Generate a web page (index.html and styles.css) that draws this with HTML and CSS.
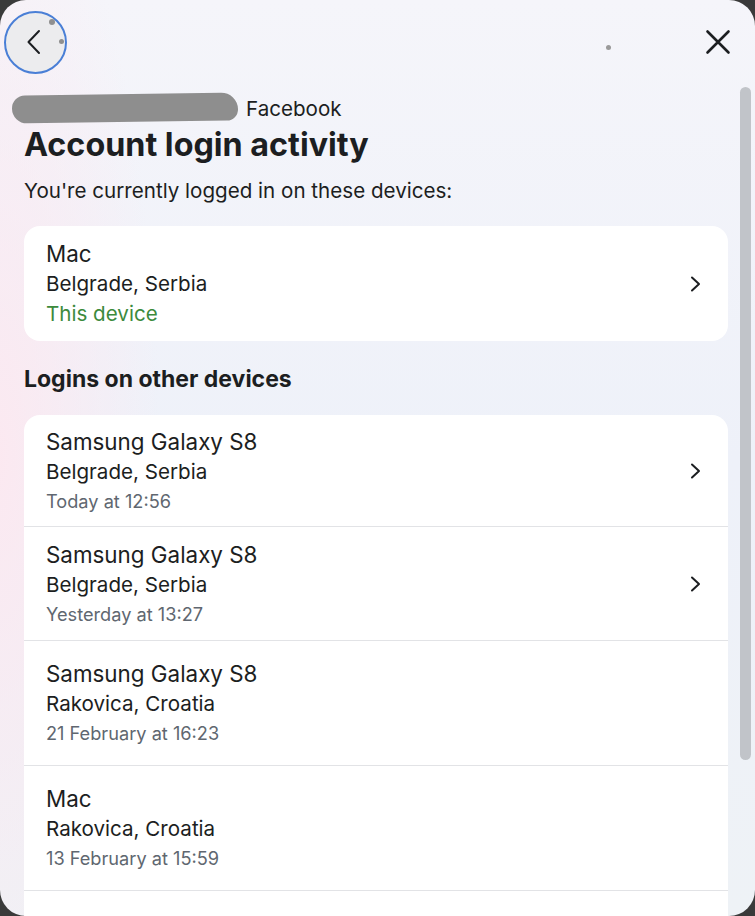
FILE: index.html
```html
<!DOCTYPE html>
<html>
<head>
<meta charset="utf-8">
<link rel="stylesheet" href="styles.css">
</head>
<body>
<div class="modal">
  <div class="topbar">
    <button class="back" aria-label="Back">
      <svg width="18" height="26" viewBox="0 0 18 26"><path d="M14 2 L3.5 13 L14 24" fill="none" stroke="#1c1e21" stroke-width="2" stroke-linecap="round" stroke-linejoin="round"/></svg>
    </button>
    <span class="dot"></span>
    <button class="close" aria-label="Close">
      <svg width="26" height="26" viewBox="0 0 26 26"><path d="M2.5 2.5 L23.5 23.5 M23.5 2.5 L2.5 23.5" fill="none" stroke="#1c1e21" stroke-width="2.6" stroke-linecap="round"/></svg>
    </button>
  </div>
  <div class="scrollbar"></div>
  <div class="content">
    <div class="account"><span class="redact"></span><span class="brand">Facebook</span></div>
    <h1 class="title">Account login activity</h1>
    <p class="subtitle">You're currently logged in on these devices:</p>
    <div class="card first">
      <div class="row">
        <div class="info">
          <div class="device">Mac</div>
          <div class="loc">Belgrade, Serbia</div>
          <div class="current">This device</div>
        </div>
        <svg class="chev" width="12" height="16" viewBox="0 0 12 16"><path d="M2 1.5 L9 8 L2 14.5" fill="none" stroke="#1c1e21" stroke-width="2" stroke-linecap="round" stroke-linejoin="round"/></svg>
      </div>
    </div>
    <h2 class="section">Logins on other devices</h2>
    <div class="card list">
      <div class="row r1">
        <div class="info">
          <div class="device">Samsung Galaxy S8</div>
          <div class="loc">Belgrade, Serbia</div>
          <div class="time">Today at 12:56</div>
        </div>
        <svg class="chev" width="12" height="16" viewBox="0 0 12 16"><path d="M2 1.5 L9 8 L2 14.5" fill="none" stroke="#1c1e21" stroke-width="2" stroke-linecap="round" stroke-linejoin="round"/></svg>
      </div>
      <div class="row r2">
        <div class="info">
          <div class="device">Samsung Galaxy S8</div>
          <div class="loc">Belgrade, Serbia</div>
          <div class="time">Yesterday at 13:27</div>
        </div>
        <svg class="chev" width="12" height="16" viewBox="0 0 12 16"><path d="M2 1.5 L9 8 L2 14.5" fill="none" stroke="#1c1e21" stroke-width="2" stroke-linecap="round" stroke-linejoin="round"/></svg>
      </div>
      <div class="row r3">
        <div class="info">
          <div class="device">Samsung Galaxy S8</div>
          <div class="loc">Rakovica, Croatia</div>
          <div class="time">21 February at 16:23</div>
        </div>
      </div>
      <div class="row r3">
        <div class="info">
          <div class="device">Mac</div>
          <div class="loc">Rakovica, Croatia</div>
          <div class="time">13 February at 15:59</div>
        </div>
      </div>
      <div class="row r3">
        <div class="info">
          <div class="device">Samsung Galaxy S8</div>
          <div class="loc">Rakovica, Croatia</div>
          <div class="time">12 February at 10:14</div>
        </div>
      </div>
    </div>
  </div>
</div>
</body>
</html>
```
FILE: styles.css
```css
html, body {
  margin: 0;
  padding: 0;
  height: 100%;
  overflow: hidden;
}
body {
  background: #3a3a3a;
  font-family: Inter, "Noto Sans", sans-serif;
  color: #1c1e21;
}
.modal {
  position: relative;
  width: 755px;
  height: 916px;
  overflow: hidden;
  border-radius: 26px;
  background:
    radial-gradient(ellipse 160px 620px at 0% 50%, rgba(252, 232, 240, 0.95), rgba(252, 232, 240, 0) 100%),
    linear-gradient(180deg, #f5f5fa 0%, #eef1f9 50%, #eef2f6 100%);
}
.topbar {
  display: flex;
  align-items: center;
  justify-content: space-between;
  padding: 11px 24px 0 4px;
  box-sizing: border-box;
  height: 73px;
}
.back {
  width: 63px;
  height: 63px;
  border-radius: 50%;
  border: 2px solid #4a7fd6;
  background: #ececee;
  display: flex;
  align-items: center;
  justify-content: center;
  padding: 0 3px 0 0;
  box-sizing: border-box;
  position: relative;
}
.back::after {
  content: "";
  position: absolute;
  right: 1px;
  top: 26px;
  width: 5px;
  height: 5px;
  border-radius: 50%;
  background: #8f8f8f;
}
.back::before {
  content: "";
  position: absolute;
  right: 10px;
  top: 6px;
  width: 6px;
  height: 6px;
  border-radius: 50%;
  background: #8f8f8f;
}
.dot {
  width: 5px;
  height: 5px;
  border-radius: 50%;
  background: #9a9a9a;
  margin-left: auto;
  margin-right: 94px;
  margin-top: 10px;
}
.close {
  border: 0;
  background: none;
  padding: 0;
  width: 26px;
  height: 26px;
  display: flex;
}
.scrollbar {
  position: absolute;
  right: 4px;
  top: 87px;
  width: 11px;
  height: 673px;
  border-radius: 6px;
  background: #c1c4c9;
}
.content {
  padding: 0 27px 0 24px;
}
.account {
  display: flex;
  align-items: center;
  height: 34px;
  margin-top: 18px;
  margin-left: -12px;
}
.redact {
  width: 226px;
  height: 28px;
  border-radius: 14px 18px 12px 16px;
  background: #8e8e8e;
  transform: rotate(-0.8deg);
  margin-right: 8px;
}
.brand {
  font-size: 20.6px;
  color: #1c1e21;
}
.title {
  margin: 0;
  font-size: 32.3px;
  font-weight: 700;
  line-height: 40px;
}
.subtitle {
  margin: 13px 0 0;
  font-size: 20.6px;
  line-height: 26px;
  color: #1c1e21;
}
.card {
  background: #fff;
  border-radius: 16px;
  margin-top: 22px;
}
.row {
  display: flex;
  align-items: center;
  justify-content: space-between;
  padding: 12px 26px 12px 22px;
  border-bottom: 1px solid #e2e3e6;
}
.row:last-child {
  border-bottom: 0;
}
.first .row {
  height: 115px;
  box-sizing: border-box;
}
.info {
  display: flex;
  flex-direction: column;
}
.device {
  font-size: 22.4px;
  line-height: 30px;
}
.loc, .current {
  font-size: 20.6px;
  line-height: 30px;
}
.current {
  color: #3c8a3c;
}
.time {
  font-size: 18.2px;
  line-height: 28px;
  color: #606770;
}
.section {
  margin: 24px 0 0;
  font-size: 23px;
  font-weight: 700;
  line-height: 28px;
}
.list {
  margin-top: 22px;
}
.row.r1 { height: 112px; box-sizing: border-box; }
.row.r2 { height: 114px; box-sizing: border-box; }
.row.r3 { height: 125px; box-sizing: border-box; padding-top: 12px; padding-bottom: 12px; }
.chev {
  flex: none;
}
```
